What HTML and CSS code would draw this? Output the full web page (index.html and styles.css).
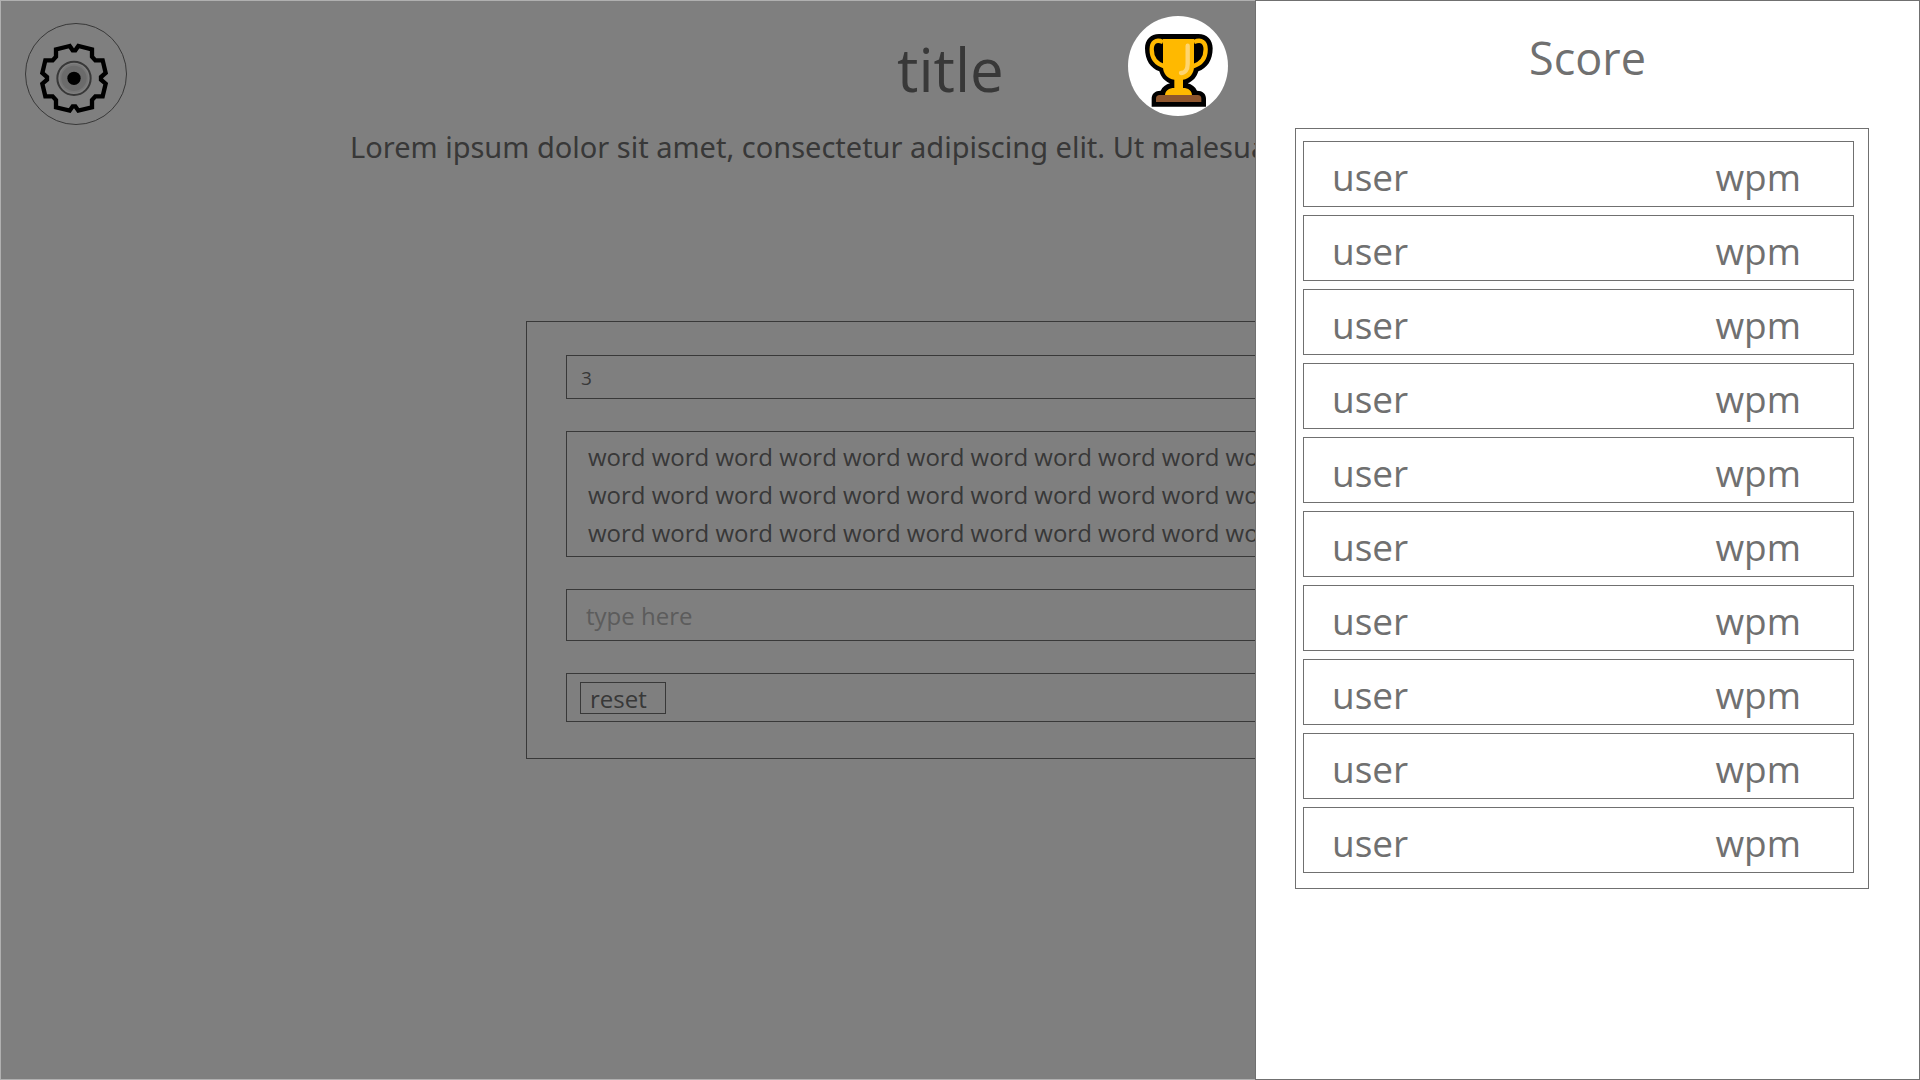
FILE: index.html
```html
<!DOCTYPE html>
<html lang="en">
<head>
<meta charset="utf-8">
<meta name="viewport" content="width=device-width, initial-scale=1">
<title>title</title>
<link rel="stylesheet" href="styles.css">
</head>
<body>
<div class="page">
  <header class="header">
    <button class="settings" type="button" aria-label="Settings">
      <svg viewBox="3 3 300 300" aria-hidden="true">
        <g transform="translate(147 166)">
          <polygon points="-13,-97 -54,-87 -54,-65 -64,-54 -86,-54 -95,-16 -81,-4 -81,4 -95,16 -86,54 -64,54 -54,65 -54,87 -13,97 -4,84 4,84 13,97 54,87 54,65 64,54 86,54 95,16 81,4 81,-4 95,-16 86,-54 64,-54 54,-65 54,-87 13,-97 4,-84 -4,-84" fill="none" stroke="#000" stroke-width="13"/>
          <circle r="50" fill="#fff" stroke="#707070" stroke-width="6"/>
          <circle r="43" fill="#ececec"/>
          <circle r="38" fill="#d6d6d6"/>
          <circle r="20" fill="#000"/>
        </g>
      </svg>
    </button>
    <h1 class="title">title</h1>
  </header>
  <p class="intro">Lorem ipsum dolor sit amet, consectetur adipiscing elit. Ut malesuada.</p>
  <main class="card">
    <div class="box timer">3</div>
    <p class="box passage">word word word word word word word word word word word word word word word word word word word word word word word word word word word word word word word word word</p>
    <input class="box entry" type="text" placeholder="type here" aria-label="type here">
    <div class="box actions"><button class="reset" type="button">reset</button></div>
  </main>
</div>
<div class="overlay">
  <button class="trophy" type="button" aria-label="Score">
    <svg viewBox="54 48 300 300" aria-hidden="true">
      <path d="M147 102H265C291 102 308 119 308 145C308 181 291 205 265 214C260 231 249 244 233 250C245 253 256 261 261 272C278 272 288 281 288 296V320H125V296C125 281 135 272 152 272C157 261 168 253 180 250C164 244 153 231 148 214C122 205 105 181 105 145C105 119 122 102 147 102Z" fill="#000"/>
      <path d="M159 126C136 116 125 128 125 148C125 177 140 192 163 199M252 126C276 116 287 128 287 148C287 177 272 192 249 199" fill="none" stroke="#ffb900" stroke-width="13"/>
      <path d="M159 117H252V200C252 220 239 236 219 239V264C235 264 246 272 246 286H165C165 272 177 264 193 264V239C172 236 159 220 159 200Z" fill="#ffb900"/>
      <path d="M138 306V296C138 289 142 285 149 285H263C270 285 274 289 274 296V306Z" fill="#8e562e"/>
      <path d="M233 137V192C233 210 225 219 213 219" fill="none" stroke="#ffd56f" stroke-width="13" stroke-linecap="round"/>
    </svg>
  </button>
  <aside class="drawer">
    <h2 class="drawer-title">Score</h2>
    <table class="scores">
      <tbody>
        <tr><td>user</td><td>wpm</td></tr>
        <tr><td>user</td><td>wpm</td></tr>
        <tr><td>user</td><td>wpm</td></tr>
        <tr><td>user</td><td>wpm</td></tr>
        <tr><td>user</td><td>wpm</td></tr>
        <tr><td>user</td><td>wpm</td></tr>
        <tr><td>user</td><td>wpm</td></tr>
        <tr><td>user</td><td>wpm</td></tr>
        <tr><td>user</td><td>wpm</td></tr>
        <tr><td>user</td><td>wpm</td></tr>
      </tbody>
    </table>
  </aside>
</div>
</body>
</html>
```
FILE: styles.css
```css
* { box-sizing: border-box; }

body {
  margin: 0;
  background: #fff;
  color: #707070;
  font-family: "Open Sans", "Noto Sans", sans-serif;
}

button,
input {
  font: inherit;
  color: inherit;
}

h1, h2, p { margin: 0; font-weight: 400; }

.page {
  display: flex;
  flex-direction: column;
  align-items: center;
  min-height: 100vh;
}

.header {
  display: grid;
  grid-template-columns: 1fr 126px 1fr;
  width: 100%;
  padding: 23px 25px 0;
}

.settings {
  width: 102px;
  height: 102px;
  padding: 0;
  border: 1px solid #707070;
  border-radius: 50%;
  background: none;
}

.settings svg,
.trophy svg { display: block; width: 100%; height: 100%; }

.title {
  padding-top: 6px;
  font-size: 60px;
  line-height: 80px;
}

.intro {
  width: 100%;
  max-width: 1220px;
  padding-top: 2px;
  font-family: "Noto Sans", "Open Sans", sans-serif;
  font-size: 29px;
  line-height: 40px;
}

.card {
  display: flex;
  flex-direction: column;
  gap: 32px;
  width: 100%;
  max-width: 868px;
  margin-top: 154px;
  padding: 33px 39px 36px;
  border: 1px solid #707070;
}

.box {
  width: 100%;
  border: 1px solid #707070;
  background: none;
}

.timer {
  padding: 2px 14px 0;
  font-size: 19px;
  line-height: 40px;
}

.passage {
  padding: 6px 21px 4px;
  font-size: 24px;
  line-height: 38px;
}

.entry {
  height: 52px;
  padding: 0 19px;
  font-size: 24px;
}

.entry::placeholder { color: #b8b8b8; opacity: 1; }

.actions { display: flex; padding: 8px 13px 7px; }

.reset {
  width: 86px;
  height: 32px;
  padding: 1px 9px 0;
  border: 1px solid #707070;
  background: none;
  font-size: 24px;
  line-height: 29px;
  text-align: left;
}

/* Dimmed layer that carries the score drawer */
.overlay {
  position: fixed;
  inset: 0;
  display: flex;
  justify-content: flex-end;
  align-items: flex-start;
  border: 1px solid #b0b0b0;
  background: rgba(0, 0, 0, 0.5);
}

.trophy {
  flex: none;
  width: 100px;
  height: 100px;
  margin: 15px 28px 0 0;
  padding: 0;
  border: 0;
  border-radius: 50%;
  background: #fff;
}

.drawer {
  width: 665px;
  max-width: 100%;
  height: 100vh;
  margin: -1px;
  padding: 27px 50px 0 39px;
  border: 1px solid #707070;
  background: #fff;
}

.drawer-title {
  margin: 0 0 40px 11px;
  font-size: 45px;
  line-height: 60px;
  text-align: center;
}

.scores {
  display: block;
  padding: 12px 14px 15px 7px;
  border: 1px solid #707070;
  font-size: 37px;
  line-height: 59px;
}

.scores tbody { display: grid; gap: 8px; }

.scores tr {
  display: flex;
  justify-content: space-between;
  padding: 5px 52px 0 28px;
  border: 1px solid #707070;
}

.scores td { padding: 0; }
```
